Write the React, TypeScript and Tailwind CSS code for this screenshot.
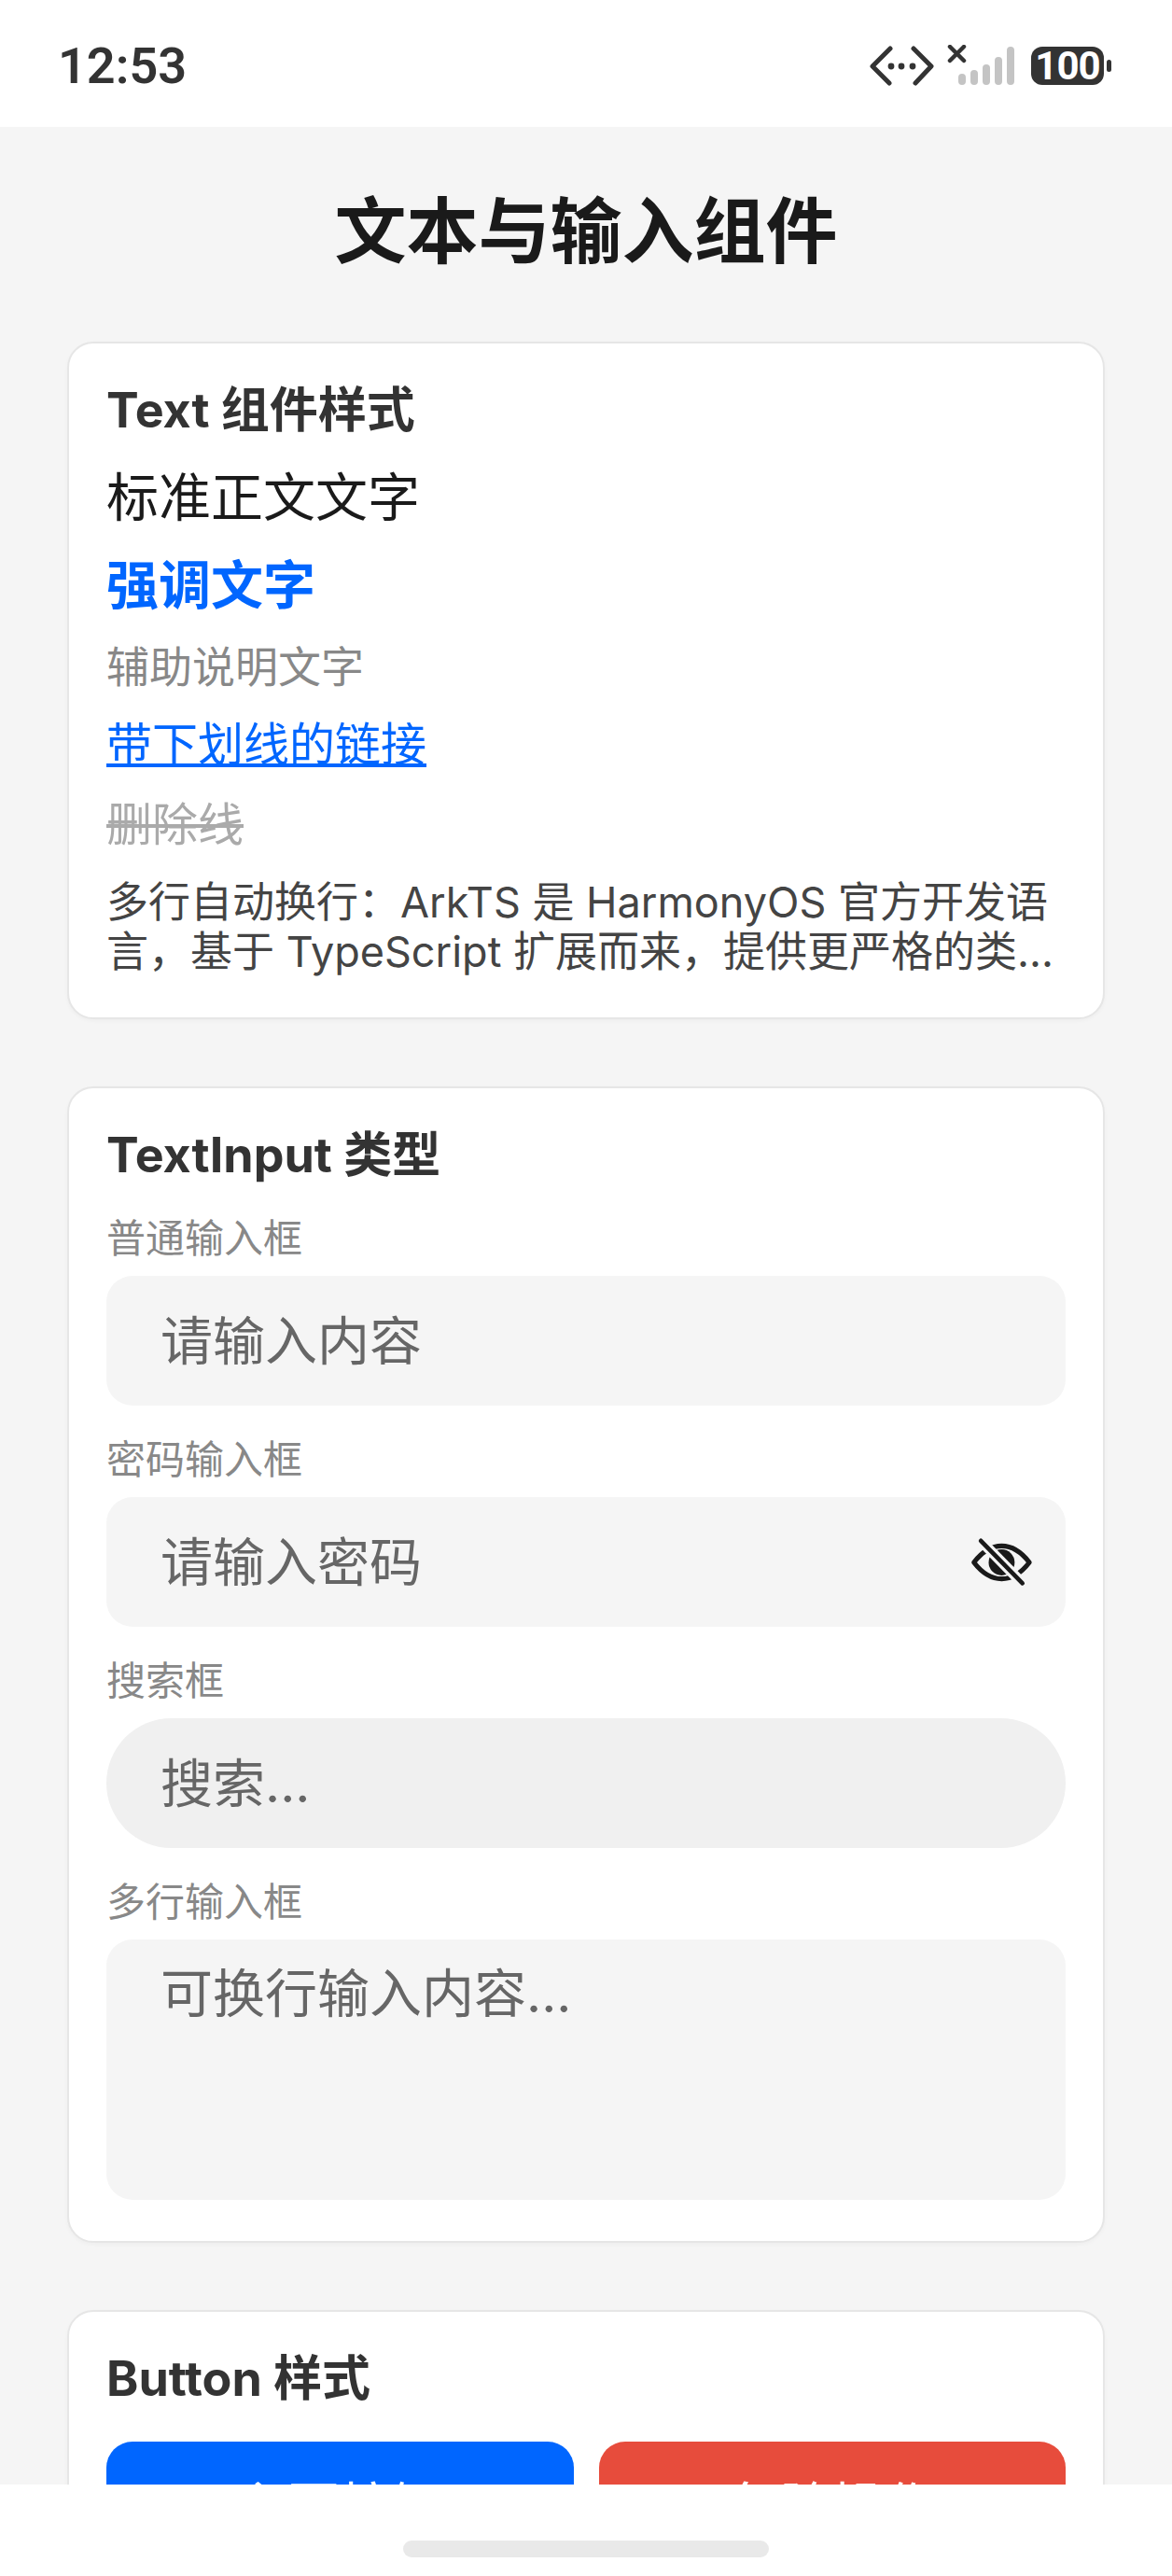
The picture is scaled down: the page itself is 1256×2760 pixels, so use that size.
import type { ReactNode } from "react";

const FONT = "font-['Inter','Noto_Sans_CJK_SC',sans-serif]";

function StatusBar() {
  return (
    <header className="flex h-[136px] shrink-0 items-center justify-between bg-white pl-[62px] pr-[65px] pt-[5px]">
      <span className="font-['Roboto','Noto_Sans_CJK_SC',sans-serif] text-[54px] font-semibold leading-none text-[#333]">12:53</span>
      <div className="flex items-center">
        <svg width="155" height="45" viewBox="0 0 155 45" fill="none" className="mr-[18px]">
          <path d="M22 4 3 23l18 18M47 4l19 19-17 18" stroke="#333" strokeWidth="5" strokeLinecap="round" strokeLinejoin="round" />
          <circle cx="23" cy="23" r="3.4" fill="#333" />
          <circle cx="34" cy="23" r="3.4" fill="#333" />
          <circle cx="46" cy="23" r="3.4" fill="#333" />
          <path d="M86 2l15 15M101 2 86 17" stroke="#333" strokeWidth="4.5" strokeLinecap="round" />
          <rect x="95" y="31" width="8" height="12" rx="4" fill="#c4c4c4" />
          <rect x="108" y="27" width="8" height="16" rx="4" fill="#c4c4c4" />
          <rect x="121" y="21" width="8" height="22" rx="4" fill="#c4c4c4" />
          <rect x="134" y="13" width="8" height="30" rx="4" fill="#c4c4c4" />
          <rect x="147" y="2" width="8" height="41" rx="4" fill="#c4c4c4" />
        </svg>
        <div className="flex h-[41px] w-[78px] items-center justify-center rounded-[12px] bg-[#333] font-['Roboto',sans-serif] text-[42px] font-bold leading-none tracking-[-1px] text-white">100</div>
        <div className="ml-[3px] h-[13px] w-[5px] rounded-full bg-[#333]" />
      </div>
    </header>
  );
}

function Card({ title, children }: { title: string; children: ReactNode }) {
  return (
    <section className="mb-[72px] rounded-[28px] border-2 border-[#e6e6e6] bg-white px-[40px] pb-[44px] pt-[42px] shadow-[0_2px_4px_rgba(0,0,0,0.03)]">
      <h2 className="text-[52px] font-bold leading-[60px] text-[#333]">{title}</h2>
      {children}
    </section>
  );
}

function Field({ label, children }: { label: string; children: ReactNode }) {
  return (
    <div>
      <div className="mb-[10px] text-[42px] leading-[60px] text-[#888]">{label}</div>
      {children}
    </div>
  );
}

function EyeOff() {
  return (
    <svg width="72" height="60" viewBox="0 0 72 60" fill="none">
      <path d="M4 30C14 17 24 11 36 11s22 6 32 19C58 43 48 49 36 49S14 43 4 30Z" stroke="#1a1a1a" strokeWidth="5.5" strokeLinejoin="round" />
      <circle cx="36" cy="30" r="15" fill="#1a1a1a" />
      <path d="M12 5l48 49" stroke="#f5f5f5" strokeWidth="12" />
      <path d="M12 5l48 49" stroke="#1a1a1a" strokeWidth="5" strokeLinecap="round" />
    </svg>
  );
}

export default function App() {
  const inputText = "w-full bg-transparent text-[56px] text-[#333] outline-none placeholder:text-[#666]";
  return (
    <div className={`flex h-[2760px] w-[1256px] flex-col overflow-hidden bg-[#f5f5f5] ${FONT}`}>
      <StatusBar />
      <main className="min-h-0 flex-1 overflow-hidden px-[72px]">
        <h1 className="pb-[72px] pt-[66px] text-center text-[77px] font-bold leading-[92px] text-[#1a1a1a]">文本与输入组件</h1>

        <Card title="Text 组件样式">
          <p className="mt-[23px] text-[56px] leading-[80px] text-[#1a1a1a]">标准正文文字</p>
          <p className="mt-[14px] text-[56px] font-bold leading-[80px] text-[#0066ff]">强调文字</p>
          <p className="mt-[12px] text-[46px] leading-[70px] text-[#888]">辅助说明文字</p>
          <p className="mt-[14px] text-[49px] leading-[70px] text-[#0066ff] underline">带下划线的链接</p>
          <p className="mt-[16px] text-[49px] leading-[70px] text-[#aaa] line-through">删除线</p>
          <p className="mt-[21px] text-[45px] leading-[53px] text-[#444]">
            多行自动换行：ArkTS 是 HarmonyOS 官方开发语言，基于 TypeScript 扩展而来，提供更严格的类...
          </p>
        </Card>

        <Card title="TextInput 类型">
          <div className="mt-[29px] flex flex-col gap-[28px]">
            <Field label="普通输入框">
              <div className="flex h-[139px] items-center rounded-[28px] bg-[#f5f5f5] px-[58px]">
                <input className={inputText} placeholder="请输入内容" />
              </div>
            </Field>
            <Field label="密码输入框">
              <div className="flex h-[139px] items-center rounded-[28px] bg-[#f5f5f5] pl-[58px] pr-[35px]">
                <input type="password" className={inputText} placeholder="请输入密码" />
                <EyeOff />
              </div>
            </Field>
            <Field label="搜索框">
              <div className="flex h-[139px] items-center rounded-full bg-[#f0f0f0] px-[58px]">
                <input className={inputText} placeholder="搜索..." />
              </div>
            </Field>
            <Field label="多行输入框">
              <div className="h-[279px] rounded-[28px] bg-[#f5f5f5] px-[58px] pt-[16px]">
                <textarea className={`${inputText} h-full resize-none`} placeholder="可换行输入内容..." />
              </div>
            </Field>
          </div>
        </Card>

        <Card title="Button 样式">
          <div className="mt-[37px] flex gap-[27px]">
            <button className="h-[139px] flex-1 rounded-[28px] bg-[#0066ff] text-[56px] text-white">主要按钮</button>
            <button className="h-[139px] flex-1 rounded-[28px] bg-[#e74c3c] text-[56px] text-white">危险操作</button>
          </div>
        </Card>
      </main>
      <footer className="flex h-[98px] shrink-0 justify-center bg-white pt-[60px]">
        <div className="h-[18px] w-[392px] rounded-full bg-[#e9e9e9]" />
      </footer>
    </div>
  );
}
